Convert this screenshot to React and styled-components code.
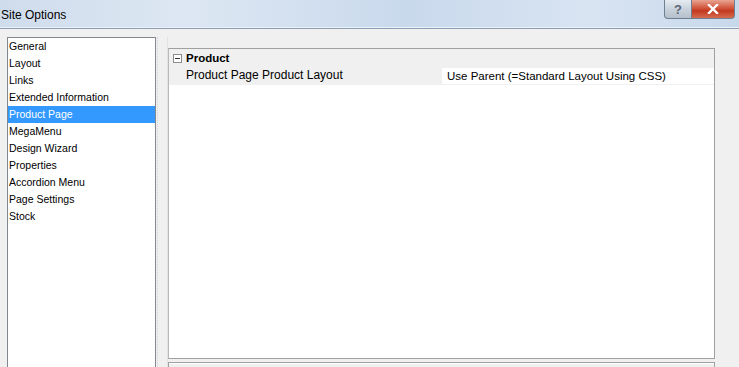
import React from 'react';
import styled, { createGlobalStyle } from 'styled-components';

const pages = [
  'General',
  'Layout',
  'Links',
  'Extended Information',
  'Product Page',
  'MegaMenu',
  'Design Wizard',
  'Properties',
  'Accordion Menu',
  'Page Settings',
  'Stock',
];

const GlobalStyle = createGlobalStyle`
  html, body {
    margin: 0;
    padding: 0;
    width: 739px;
    height: 367px;
    overflow: hidden;
    background: #f0f0f0;
    font-family: "Liberation Sans", Arial, sans-serif;
  }
`;

const SiteOptions = () => {
  return (
    <Window>
      <GlobalStyle />
      <TitleBar>
        <Title>Site Options</Title>
        <HelpButton>?</HelpButton>
        <CloseButton>
          <svg width="12" height="10" viewBox="0 0 12 10">
            <path d="M2 1 L10 9 M10 1 L2 9" stroke="#fff" strokeWidth="2.4" strokeLinecap="square" />
          </svg>
        </CloseButton>
      </TitleBar>
      <Body>
        <PageList>
          {pages.map(p => (
            <PageItem key={p} selected={p === 'Product Page'}>{p}</PageItem>
          ))}
        </PageList>
        <Splitter />
        <RightColumn>
          <PropertyGrid>
            <CategoryRow>
              <Toggle>
                <svg width="9" height="9" viewBox="0 0 9 9">
                  <rect x="0.5" y="0.5" width="8" height="8" fill="#fff" stroke="#8c8c8c" />
                  <path d="M2 4.5 H7" stroke="#333" strokeWidth="1" />
                </svg>
              </Toggle>
              <CategoryName>Product</CategoryName>
            </CategoryRow>
            <PropertyRow>
              <PropertyName>Product Page Product Layout</PropertyName>
              <PropertyValue>Use Parent (=Standard Layout Using CSS)</PropertyValue>
            </PropertyRow>
          </PropertyGrid>
          <HelpBox />
        </RightColumn>
      </Body>
    </Window>
  );
};

const Window = styled.div`
  width: 739px;
  height: 367px;
  display: flex;
  flex-direction: column;
  background: #f0f0f0;
`;

const TitleBar = styled.div`
  height: 28px;
  flex-shrink: 0;
  display: flex;
  align-items: flex-start;
  background: linear-gradient(90deg, #cfdcec 0%, #dde7f3 25%, #c9d9ec 55%, #d8e4f2 80%, #c8d8eb 100%);
  border-bottom: 1px solid #8e9fb4;
  box-shadow: inset 0 -1px 0 #eaf1f9;
`;

const Title = styled.div`
  font-size: 12px;
  color: #000;
  padding: 8px 0 0 1px;
  flex: 1;
`;

const CaptionButton = styled.div`
  height: 19px;
  display: flex;
  align-items: center;
  justify-content: center;
  border: 1px solid #6f7f92;
  border-top: none;
  box-sizing: border-box;
`;

const HelpButton = styled(CaptionButton)`
  width: 28px;
  border-radius: 0 0 0 4px;
  background: linear-gradient(180deg, #e6ebf1 0%, #c9d2dc 50%, #b5c0cc 100%);
  color: #5b6775;
  font-size: 13px;
  font-weight: bold;
`;

const CloseButton = styled(CaptionButton)`
  width: 43px;
  margin-right: 4px;
  border-left: none;
  border-radius: 0 0 4px 0;
  background: linear-gradient(180deg, #e8a493 0%, #d2553c 45%, #c2391f 60%, #d66c4f 100%);
`;

const Body = styled.div`
  flex: 1;
  display: flex;
  padding: 8px 24px 0 7px;
  min-height: 0;
`;

const PageList = styled.div`
  width: 149px;
  background: #fff;
  border: 1px solid #828790;
  border-bottom: none;
  box-sizing: border-box;
  display: flex;
  flex-direction: column;
`;

const PageItem = styled.div`
  height: 17px;
  line-height: 17px;
  font-size: 10.5px;
  padding-left: 1px;
  color: ${props => (props.selected ? '#fff' : '#000')};
  background: ${props => (props.selected ? '#3399ff' : 'transparent')};
`;

const Splitter = styled.div`
  width: 11px;
  box-sizing: border-box;
  border-left: 1px dotted #d4d4d4;
  border-right: 1px solid #e3e3e3;
  margin-left: 1px;
`;

const RightColumn = styled.div`
  flex: 1;
  display: flex;
  flex-direction: column;
  padding-top: 11px;
`;

const PropertyGrid = styled.div`
  height: 311px;
  background: #fff;
  border: 1px solid #a0a0a0;
  border-left-color: #b9b9b9;
  box-sizing: border-box;
  display: flex;
  flex-direction: column;
`;

const CategoryRow = styled.div`
  height: 18px;
  display: flex;
  align-items: center;
  background: #f0f0f0;
  padding-left: 4px;
`;

const Toggle = styled.div`
  width: 13px;
  display: flex;
  align-items: center;
`;

const CategoryName = styled.div`
  font-size: 11.5px;
  font-weight: bold;
  color: #000;
`;

const PropertyRow = styled.div`
  height: 17px;
  display: flex;
  line-height: 17px;
  border-bottom: 1px solid #f0f0f0;
`;

const PropertyName = styled.div`
  width: 273px;
  box-sizing: border-box;
  background: #f0f0f0;
  padding-left: 17px;
  font-size: 12px;
  color: #000;
  white-space: nowrap;
`;

const PropertyValue = styled.div`
  flex: 1;
  padding-left: 5px;
  font-size: 11.5px;
  color: #000;
  background: #fff;
  border-top: 1px solid #f0f0f0;
  line-height: 16px;
  white-space: nowrap;
`;

const HelpBox = styled.div`
  margin-top: 3px;
  flex: 1;
  border: 1px solid #a0a0a0;
  border-bottom: none;
  box-shadow: inset 0 1px 0 #fff;
  background: #f0f0f0;
`;

export default SiteOptions;
